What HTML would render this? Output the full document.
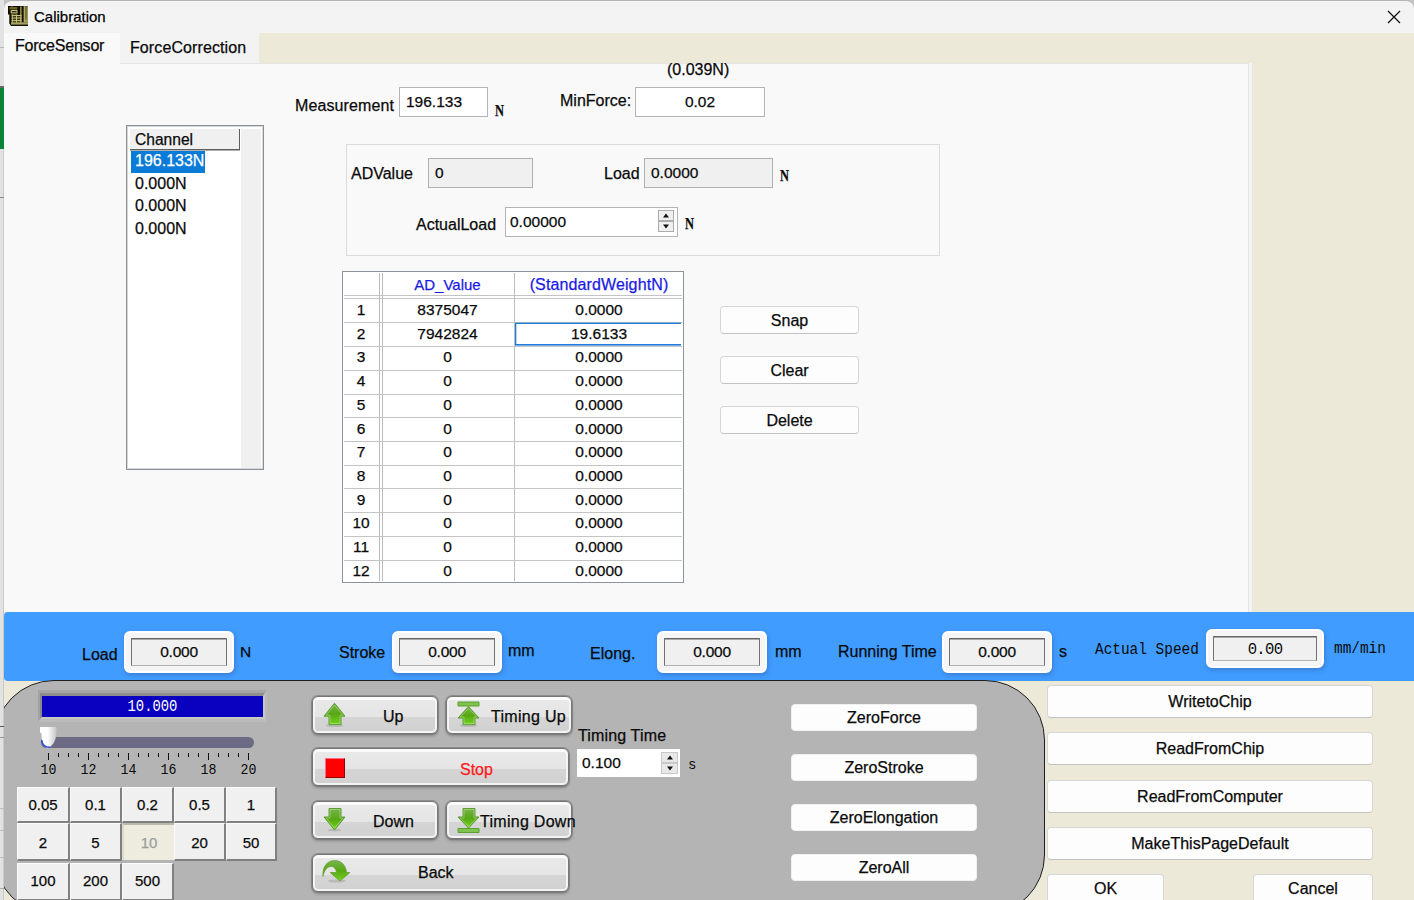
<!DOCTYPE html>
<html lang="en">
<head>
<meta charset="utf-8">
<title>Calibration</title>
<style>
html,body{margin:0;padding:0;}
body{width:1414px;height:900px;overflow:hidden;position:relative;background:#ece9d8;
  font-family:"Liberation Sans",sans-serif;font-size:16px;color:#0a0a0a;-webkit-text-stroke:0.25px;}
.a{position:absolute;box-sizing:border-box;}
.t{position:absolute;white-space:nowrap;line-height:20px;height:20px;}
.mono{font-family:"Liberation Mono",monospace;-webkit-text-stroke:0;}
.c{text-align:center;}
/* inputs */
.in{font-size:15.5px;position:absolute;box-sizing:border-box;background:#fff;border:1px solid #b4b4b8;line-height:27px;padding-left:6px;white-space:nowrap;}
.in.ro{background:#f0f0f0;border-color:#b0b0b0;}
/* flat win11 button */
.wb{position:absolute;box-sizing:border-box;background:#fdfdfd;border:1px solid #d6d6d6;border-bottom-color:#c2c2c2;border-radius:4px;text-align:center;white-space:nowrap;}
/* glossy button */
.gb{position:absolute;box-sizing:border-box;border:1px solid #767676;border-radius:6px;
  background:linear-gradient(#e9e9e9 0%,#e5e5e5 55%,#d5d5d5 55%,#d1d1d1 100%);
  box-shadow:inset 0 4px 0 -1px #fbfbfb, inset 2px 0 0 0 #f4f4f4, inset -2px 0 0 0 #f4f4f4, inset 0 -2px 0 0 #f4f4f4, 0 0 0 1px rgba(110,110,110,.55), 0 2px 3px rgba(0,0,0,.25);white-space:nowrap;}
/* bevel speed buttons */
.sb{position:absolute;box-sizing:border-box;background:#f0f0f0;font-size:15px;
  border-top:1px solid #fbfbfb;border-left:1px solid #fbfbfb;border-right:2px solid #808080;border-bottom:2px solid #808080;
  text-align:center;white-space:nowrap;}
.sb.dn{background:#eeebdf;color:#9c9c9c;border-top:2px solid #b9b9ab;border-left:2px solid #dcdacb;border-right:0;border-bottom:0;}
/* readout box in blue bar */
.rb{position:absolute;box-sizing:border-box;background:#f5f5f5;border:2px solid #fefefe;border-radius:6px;box-shadow:1px 2px 4px rgba(50,80,140,.4);}
.rb i{position:absolute;box-sizing:border-box;left:5px;top:5px;right:5px;bottom:5px;background:#f0f0f0;
  border:1px solid #727272;border-top-color:#666;border-bottom-color:#b2b2b2;box-shadow:inset 0 1px 0 #a8a8a8;
  font-style:normal;text-align:center;line-height:25px;white-space:nowrap;font-size:15.5px;letter-spacing:-0.25px;}
</style>
</head>
<body>
<!-- left strip of window behind -->
<div class="a" style="left:0;top:0;width:4px;height:900px;background:#e2e2e2"></div>
<div class="a" style="left:3px;top:150px;width:1px;height:750px;background:#c9c9c9"></div>
<div class="a" style="left:0;top:47px;width:4px;height:1px;background:#b8b8b8"></div>
<div class="a" style="left:0;top:86px;width:4px;height:2px;background:#6a6a6a"></div>
<div class="a" style="left:0;top:88px;width:4px;height:61px;background:#0a8438"></div>
<div class="a" style="left:0;top:197px;width:4px;height:1px;background:#8c8c8c"></div>
<div class="a" style="left:0;top:726px;width:4px;height:1px;background:#555"></div>
<div class="a" style="left:0;top:737px;width:4px;height:1px;background:#999"></div>
<div class="a" style="left:0;top:808px;width:4px;height:1px;background:#bbb"></div>
<div class="a" style="left:0;top:830px;width:4px;height:1px;background:#bbb"></div>
<div class="a" style="left:0;top:857px;width:4px;height:1px;background:#bbb"></div>
<div class="a" style="left:0;top:888px;width:4px;height:1px;background:#aaa"></div>

<!-- title bar -->
<div class="a" style="left:4px;top:0;width:1410px;height:10px;background:#c4c4c4"></div>
<div class="a" style="left:4px;top:0;width:1410px;height:33px;background:#f3f3f3;border-top:1px solid #b4b4b4;border-radius:8px 8px 0 0"></div>
<svg class="a" style="left:8px;top:6px" width="20" height="20" viewBox="0 0 20 20">
<path d="M0 0 H20 V20 H3 L1.3 17.5 V8.6 H0 Z" fill="#120f00"/>
<rect x="1.5" y="1" width="7.8" height="2.6" fill="#6a6628"/>
<rect x="3.6" y="0.2" width="1" height="1" fill="#8a8644"/>
<rect x="2.6" y="4.1" width="7" height="3.5" rx="1" fill="#c4c184"/>
<rect x="3.8" y="5.2" width="4.8" height="1.1" fill="#120f00"/>
<rect x="2.8" y="7.7" width="6.8" height="1" fill="#6e6a2c"/>
<rect x="12" y="0.5" width="1.7" height="16" fill="#8a8644"/>
<rect x="15.6" y="0.2" width="4.4" height="16.2" fill="#9c985a"/>
<rect x="16.3" y="0.2" width="0.8" height="16" fill="#b6b272"/>
<rect x="17.5" y="0.2" width="0.9" height="13.2" fill="#4a4612"/>
<rect x="3.6" y="8.7" width="9.8" height="8.3" fill="#3c3808"/>
<g fill="#d2cf92"><rect x="3.6" y="9" width="9.8" height="0.9"/><rect x="3.6" y="11.6" width="9.8" height="0.9"/><rect x="3.6" y="14.2" width="9.8" height="0.9"/>
<rect x="3.8" y="8.7" width="0.9" height="8.3"/><rect x="8.1" y="8.7" width="0.9" height="8.3"/><rect x="12.4" y="8.7" width="0.9" height="8.3"/></g>
<rect x="3" y="16.3" width="17" height="2.3" fill="#a6a262"/>
</svg>
<div class="t" style="left:34px;top:7px;font-size:15px;color:#000">Calibration</div>
<svg class="a" style="left:1387px;top:10px" width="14" height="14" viewBox="0 0 14 14"><path d="M1 1 L13 13 M13 1 L1 13" stroke="#111" stroke-width="1.3" fill="none"/></svg>

<!-- tabs -->
<div class="a" style="left:4px;top:33px;width:116px;height:31px;background:#f9f9f9"></div>
<div class="a" style="left:120px;top:33px;width:139px;height:30px;background:#f3f3f3"></div>

<!-- tab pane -->
<div class="a" style="left:4px;top:63px;width:1248px;height:549px;background:#f3f3f3"></div>
<div class="a" style="left:4px;top:63px;width:1245px;height:549px;background:#f9f9f9;border-top:1px solid #e5e5e5;border-right:1px solid #e5e5e5"></div>
<div class="a" style="left:4px;top:33px;width:116px;height:32px;background:#f9f9f9"></div>
<div class="t" style="left:15px;top:36px;letter-spacing:-0.22px">ForceSensor</div>
<div class="t" style="left:130px;top:38px;letter-spacing:0.1px">ForceCorrection</div>


<!-- top row -->
<div class="t" style="left:667px;top:60px">(0.039N)</div>
<div class="t" style="left:295px;top:96px;letter-spacing:0.12px">Measurement</div>
<div class="in" style="left:399px;top:87px;width:89px;height:30px">196.133</div>
<div class="t" style="left:495px;top:101px;font-family:'Liberation Serif',serif;font-size:16px;font-weight:bold;transform:scaleX(.78);transform-origin:0 0">N</div>
<div class="t" style="left:560px;top:91px">MinForce:</div>
<div class="in c" style="left:635px;top:87px;width:130px;height:30px;padding-left:0">0.02</div>

<!-- channel list -->
<div class="a" style="left:126px;top:125px;width:138px;height:345px;background:#fff;border:1px solid #8b8f98;box-shadow:inset 0 0 0 1px rgba(139,143,152,.35)"></div>
<div class="a" style="left:241px;top:129px;width:20px;height:339px;background:#f0f0f0"></div>
<div class="a" style="left:130px;top:129px;width:110px;height:21px;background:#f0f0f0;border-right:1px solid #5e5e5e;border-bottom:1px solid #5e5e5e;box-shadow:0 1px 0 #b0b0b0"></div>
<div class="t" style="left:135px;top:130px;font-size:15.6px">Channel</div>
<div class="a" style="left:131px;top:151px;width:74px;height:22px;background:#0a7bd7"></div>
<div class="t" style="left:135px;top:151px;color:#fff">196.133N</div>
<div class="t" style="left:135px;top:174px">0.000N</div>
<div class="t" style="left:135px;top:196px">0.000N</div>
<div class="t" style="left:135px;top:219px">0.000N</div>

<!-- group box -->
<div class="a" style="left:346px;top:144px;width:594px;height:112px;border:1px solid #dcdcdc"></div>
<div class="t" style="left:351px;top:164px">ADValue</div>
<div class="in ro" style="left:428px;top:158px;width:105px;height:30px">0</div>
<div class="t" style="left:604px;top:164px">Load</div>
<div class="in ro" style="left:644px;top:158px;width:129px;height:30px">0.0000</div>
<div class="t" style="left:780px;top:166px;font-family:'Liberation Serif',serif;font-size:16px;font-weight:bold;transform:scaleX(.78);transform-origin:0 0">N</div>
<div class="t" style="left:416px;top:215px">ActualLoad</div>
<div class="in" style="left:505px;top:207px;width:173px;height:30px;padding-left:4px">0.00000</div>
<div class="a" style="left:658px;top:210px;width:16px;height:11px;background:#f0f0f0;border:1px solid #adadad"></div>
<div class="a" style="left:658px;top:221px;width:16px;height:11px;background:#f0f0f0;border:1px solid #adadad"></div>
<svg class="a" style="left:658px;top:210px" width="16" height="22" viewBox="0 0 16 22"><path d="M5 7.5 L8 3.5 L11 7.5 Z M5 14.5 L8 18.5 L11 14.5 Z" fill="#111"/></svg>
<div class="t" style="left:685px;top:214px;font-family:'Liberation Serif',serif;font-size:16px;font-weight:bold;transform:scaleX(.78);transform-origin:0 0">N</div>

<!-- table -->
<div class="a" style="left:342px;top:271px;width:342px;height:312px;background:#fff;border:1px solid #8e9299"></div>
<div class="t c" style="left:382px;top:275px;width:131px;color:#1a1ae6;font-size:15px">AD_Value</div>
<div class="t c" style="left:515px;top:275px;width:168px;color:#1a1ae6;font-size:16px;letter-spacing:0.12px">(StandardWeightN)</div>
<div class="a" style="left:344px;top:295px;width:338px;height:1px;background:#c4c4c4"></div>
<div class="a" style="left:344px;top:298px;width:338px;height:1px;background:#c4c4c4"></div>
<div class="a" style="left:379px;top:273px;width:1px;height:308px;background:#bdbdbd"></div>
<div class="a" style="left:382px;top:273px;width:1px;height:308px;background:#bdbdbd"></div>
<div class="a" style="left:514px;top:273px;width:1px;height:308px;background:#bdbdbd"></div>
<div class="t c" style="left:343px;top:300.0px;width:36px;font-size:15.5px">1</div><div class="t c" style="left:382px;top:300.0px;width:131px;font-size:15.5px">8375047</div><div class="t c" style="left:515px;top:300.0px;width:168px;font-size:15.5px">0.0000</div>
<div class="a" style="left:344px;top:322px;width:338px;height:1px;background:#c4c4c4"></div>
<div class="t c" style="left:343px;top:323.7px;width:36px;font-size:15.5px">2</div><div class="t c" style="left:382px;top:323.7px;width:131px;font-size:15.5px">7942824</div><div class="t c" style="left:515px;top:323.7px;width:168px;font-size:15.5px">19.6133</div>
<div class="a" style="left:344px;top:346px;width:338px;height:1px;background:#c4c4c4"></div>
<div class="t c" style="left:343px;top:347.4px;width:36px;font-size:15.5px">3</div><div class="t c" style="left:382px;top:347.4px;width:131px;font-size:15.5px">0</div><div class="t c" style="left:515px;top:347.4px;width:168px;font-size:15.5px">0.0000</div>
<div class="a" style="left:344px;top:370px;width:338px;height:1px;background:#c4c4c4"></div>
<div class="t c" style="left:343px;top:371.1px;width:36px;font-size:15.5px">4</div><div class="t c" style="left:382px;top:371.1px;width:131px;font-size:15.5px">0</div><div class="t c" style="left:515px;top:371.1px;width:168px;font-size:15.5px">0.0000</div>
<div class="a" style="left:344px;top:394px;width:338px;height:1px;background:#c4c4c4"></div>
<div class="t c" style="left:343px;top:394.8px;width:36px;font-size:15.5px">5</div><div class="t c" style="left:382px;top:394.8px;width:131px;font-size:15.5px">0</div><div class="t c" style="left:515px;top:394.8px;width:168px;font-size:15.5px">0.0000</div>
<div class="a" style="left:344px;top:417px;width:338px;height:1px;background:#c4c4c4"></div>
<div class="t c" style="left:343px;top:418.6px;width:36px;font-size:15.5px">6</div><div class="t c" style="left:382px;top:418.6px;width:131px;font-size:15.5px">0</div><div class="t c" style="left:515px;top:418.6px;width:168px;font-size:15.5px">0.0000</div>
<div class="a" style="left:344px;top:441px;width:338px;height:1px;background:#c4c4c4"></div>
<div class="t c" style="left:343px;top:442.3px;width:36px;font-size:15.5px">7</div><div class="t c" style="left:382px;top:442.3px;width:131px;font-size:15.5px">0</div><div class="t c" style="left:515px;top:442.3px;width:168px;font-size:15.5px">0.0000</div>
<div class="a" style="left:344px;top:465px;width:338px;height:1px;background:#c4c4c4"></div>
<div class="t c" style="left:343px;top:466.0px;width:36px;font-size:15.5px">8</div><div class="t c" style="left:382px;top:466.0px;width:131px;font-size:15.5px">0</div><div class="t c" style="left:515px;top:466.0px;width:168px;font-size:15.5px">0.0000</div>
<div class="a" style="left:344px;top:488px;width:338px;height:1px;background:#c4c4c4"></div>
<div class="t c" style="left:343px;top:489.7px;width:36px;font-size:15.5px">9</div><div class="t c" style="left:382px;top:489.7px;width:131px;font-size:15.5px">0</div><div class="t c" style="left:515px;top:489.7px;width:168px;font-size:15.5px">0.0000</div>
<div class="a" style="left:344px;top:512px;width:338px;height:1px;background:#c4c4c4"></div>
<div class="t c" style="left:343px;top:513.4px;width:36px;font-size:15.5px">10</div><div class="t c" style="left:382px;top:513.4px;width:131px;font-size:15.5px">0</div><div class="t c" style="left:515px;top:513.4px;width:168px;font-size:15.5px">0.0000</div>
<div class="a" style="left:344px;top:536px;width:338px;height:1px;background:#c4c4c4"></div>
<div class="t c" style="left:343px;top:537.1px;width:36px;font-size:15.5px">11</div><div class="t c" style="left:382px;top:537.1px;width:131px;font-size:15.5px">0</div><div class="t c" style="left:515px;top:537.1px;width:168px;font-size:15.5px">0.0000</div>
<div class="a" style="left:344px;top:560px;width:338px;height:1px;background:#c4c4c4"></div>
<div class="t c" style="left:343px;top:560.8px;width:36px;font-size:15.5px">12</div><div class="t c" style="left:382px;top:560.8px;width:131px;font-size:15.5px">0</div><div class="t c" style="left:515px;top:560.8px;width:168px;font-size:15.5px">0.0000</div>
<div class="a" style="left:515px;top:323px;width:166px;height:22px;border:1px solid #1c7ad8;border-right:0;box-shadow:0 -1px 0 rgba(28,122,216,.3),0 1px 0 rgba(28,122,216,.6),inset 1px 0 0 rgba(28,122,216,.3)"></div>


<!-- snap/clear/delete -->
<div class="wb" style="left:720px;top:306px;width:139px;height:28px;line-height:28px">Snap</div>
<div class="wb" style="left:720px;top:356px;width:139px;height:28px;line-height:28px">Clear</div>
<div class="wb" style="left:720px;top:406px;width:139px;height:28px;line-height:28px">Delete</div>


<!-- blue bar -->
<div class="a" style="left:4px;top:612px;width:1410px;height:69px;background:#409cff;border-radius:4px 0 0 4px"></div>

<div class="t" style="left:82px;top:645px;font-size:16px">Load</div>
<div class="rb" style="left:124px;top:631px;width:110px;height:42px"><i>0.000</i></div>
<div class="t" style="left:240px;top:642px;font-size:15.5px">N</div>
<div class="t" style="left:339px;top:643px;font-size:16px">Stroke</div>
<div class="rb" style="left:392px;top:631px;width:110px;height:42px"><i>0.000</i></div>
<div class="t" style="left:508px;top:641px;font-size:16px">mm</div>
<div class="t" style="left:590px;top:644px;font-size:16px">Elong.</div>
<div class="rb" style="left:657px;top:631px;width:110px;height:42px"><i>0.000</i></div>
<div class="t" style="left:775px;top:642px;font-size:16px">mm</div>
<div class="t" style="left:838px;top:642px;font-size:16px">Running Time</div>
<div class="rb" style="left:942px;top:631px;width:110px;height:42px"><i>0.000</i></div>
<div class="t" style="left:1059px;top:642px;font-size:16px">s</div>
<div class="t mono" style="left:1095px;top:640px;font-size:15.6px;transform:scaleX(.925);transform-origin:0 50%">Actual Speed</div>
<div class="rb" style="left:1206px;top:629px;width:118px;height:39px"><i class="mono" style="font-size:15.6px;line-height:26px;letter-spacing:-0.7px">0.00</i></div>
<div class="t mono" style="left:1334px;top:639px;font-size:15.6px;transform:scaleX(.925);transform-origin:0 50%">mm/min</div>


<!-- gray panel -->
<div class="a" style="left:4px;top:670px;width:1100px;height:230px;overflow:hidden"><div class="a" style="left:-10.5px;top:10px;width:1051px;height:235px;background:#b4b4b4;border:1px solid #1e1e1e;border-radius:60px"></div></div>

<!-- speed indicator -->
<div class="a" style="left:38px;top:690px;width:229px;height:32px;border-top:3px solid #a6a6a6;border-left:2px solid #a2a2a2;border-right:2px solid #bababa;border-bottom:3px solid #bcbcbc"></div><div class="a" style="left:40px;top:693px;width:225px;height:26px;border-top:3px solid #8e8e8e;border-left:2px solid #8a8a8a;border-right:2px solid #c6c6c4;border-bottom:2px solid #c9c9c3;background:#0a00c0"></div>
<div class="t mono c" style="left:42px;top:697px;width:221px;color:#fff;font-size:16.9px;transform:scaleX(.82)">10.000</div>
<!-- slider -->
<div class="a" style="left:41px;top:737px;width:213px;height:11px;background:#6b6b85;border-radius:6px"></div>
<svg class="a" style="left:36px;top:724px" width="26" height="28" viewBox="36 724 26 28"><defs><linearGradient id="th" x1="0" y1="0" x2="1" y2="0"><stop offset="0.45" stop-color="#ffffff"/><stop offset="1" stop-color="#c4c4c4"/></linearGradient></defs>
<path d="M40 727 H56.5 V731 C56.5 738 54.5 745 48 748 C44 747 41.5 742 41.3 733 H40 Z" fill="url(#th)"/>
<path d="M41.6 740 C42.2 744 45 747.3 50 747.3" fill="none" stroke="#2748e6" stroke-width="1.4"/></svg>
<div class="a" style="left:48px;top:753px;width:1px;height:7px;background:#111"></div><div class="a" style="left:58px;top:753px;width:1px;height:4px;background:#111"></div><div class="a" style="left:68px;top:753px;width:1px;height:4px;background:#111"></div><div class="a" style="left:78px;top:753px;width:1px;height:4px;background:#111"></div><div class="a" style="left:88px;top:753px;width:1px;height:7px;background:#111"></div><div class="a" style="left:98px;top:753px;width:1px;height:4px;background:#111"></div><div class="a" style="left:108px;top:753px;width:1px;height:4px;background:#111"></div><div class="a" style="left:118px;top:753px;width:1px;height:4px;background:#111"></div><div class="a" style="left:128px;top:753px;width:1px;height:7px;background:#111"></div><div class="a" style="left:138px;top:753px;width:1px;height:4px;background:#111"></div><div class="a" style="left:148px;top:753px;width:1px;height:4px;background:#111"></div><div class="a" style="left:158px;top:753px;width:1px;height:4px;background:#111"></div><div class="a" style="left:168px;top:753px;width:1px;height:7px;background:#111"></div><div class="a" style="left:178px;top:753px;width:1px;height:4px;background:#111"></div><div class="a" style="left:188px;top:753px;width:1px;height:4px;background:#111"></div><div class="a" style="left:198px;top:753px;width:1px;height:4px;background:#111"></div><div class="a" style="left:208px;top:753px;width:1px;height:7px;background:#111"></div><div class="a" style="left:218px;top:753px;width:1px;height:4px;background:#111"></div><div class="a" style="left:228px;top:753px;width:1px;height:4px;background:#111"></div><div class="a" style="left:238px;top:753px;width:1px;height:4px;background:#111"></div><div class="a" style="left:248px;top:753px;width:1px;height:7px;background:#111"></div><div class="t mono c" style="left:33px;top:760px;width:31px;font-size:15.4px;transform:scaleX(.86)">10</div><div class="t mono c" style="left:73px;top:760px;width:31px;font-size:15.4px;transform:scaleX(.86)">12</div><div class="t mono c" style="left:113px;top:760px;width:31px;font-size:15.4px;transform:scaleX(.86)">14</div><div class="t mono c" style="left:153px;top:760px;width:31px;font-size:15.4px;transform:scaleX(.86)">16</div><div class="t mono c" style="left:193px;top:760px;width:31px;font-size:15.4px;transform:scaleX(.86)">18</div><div class="t mono c" style="left:233px;top:760px;width:31px;font-size:15.4px;transform:scaleX(.86)">20</div>
<!-- speed buttons -->
<div class="sb" style="left:17px;top:787px;width:53px;height:36px;line-height:34.2px">0.05</div>
<div class="sb" style="left:70px;top:787px;width:52px;height:36px;line-height:34.2px">0.1</div>
<div class="sb" style="left:122px;top:787px;width:52px;height:36px;line-height:34.2px">0.2</div>
<div class="sb" style="left:174px;top:787px;width:52px;height:36px;line-height:34.2px">0.5</div>
<div class="sb" style="left:226px;top:787px;width:51px;height:36px;line-height:34.2px">1</div>
<div class="sb" style="left:17px;top:823px;width:53px;height:38px;line-height:37.8px">2</div>
<div class="sb" style="left:70px;top:823px;width:52px;height:38px;line-height:37.8px">5</div>
<div class="sb dn" style="left:122px;top:823px;width:52px;height:37px;line-height:35.8px">10</div>
<div class="sb" style="left:174px;top:823px;width:52px;height:38px;line-height:37.8px">20</div>
<div class="sb" style="left:226px;top:823px;width:51px;height:38px;line-height:37.8px">50</div>
<div class="sb" style="left:17px;top:863px;width:53px;height:38px;line-height:34.2px">100</div>
<div class="sb" style="left:70px;top:863px;width:52px;height:38px;line-height:34.2px">200</div>
<div class="sb" style="left:122px;top:863px;width:52px;height:38px;line-height:34.2px">500</div>

<!-- glossy buttons -->
<div class="gb" style="left:312px;top:696px;width:126px;height:38px"></div>
<div class="gb" style="left:446px;top:696px;width:126px;height:38px"></div>
<div class="gb" style="left:312px;top:748px;width:257px;height:38px"></div>
<div class="gb" style="left:312px;top:801px;width:126px;height:38px"></div>
<div class="gb" style="left:446px;top:801px;width:126px;height:38px"></div>
<div class="gb" style="left:312px;top:854px;width:257px;height:38px"></div>
<div class="t" style="left:383px;top:707px;font-size:16px">Up</div>
<div class="t" style="left:491px;top:707px;font-size:16px;letter-spacing:0.3px">Timing Up</div>
<div class="t" style="left:460px;top:760px;font-size:16px;color:#ff1a1a">Stop</div>
<div class="t" style="left:373px;top:812px;font-size:16px">Down</div>
<div class="t" style="left:480px;top:812px;font-size:16px;letter-spacing:0.28px">Timing Down</div>
<div class="t" style="left:418px;top:863px;font-size:16px">Back</div>
<svg class="a" style="left:300px;top:690px" width="300" height="210" viewBox="300 690 300 210">
<defs>
<linearGradient id="g1" x1="0" y1="0" x2="0" y2="1"><stop offset="0" stop-color="#78b44c"/><stop offset="0.5" stop-color="#57a714"/><stop offset="1" stop-color="#74d41e"/></linearGradient>
</defs>
<g fill="rgba(0,0,0,.12)"><ellipse cx="334.5" cy="725.5" rx="9" ry="1.6"/><ellipse cx="468.5" cy="725.5" rx="9" ry="1.6"/><ellipse cx="334.5" cy="830" rx="7" ry="1.4"/><ellipse cx="337" cy="881" rx="9" ry="1.6"/></g>
<g stroke="#5d9e30" stroke-width="1" stroke-linejoin="round">
<path d="M334.5 703.2 L345 716.2 L341 716.2 L341 724.6 L329 724.6 L329 716.2 L324 716.2 Z" fill="url(#g1)"/>
<path d="M458 702 H479 V706 H458 Z" fill="#7fc44e"/>
<path d="M468.5 706.6 L479 718 L475 718 L475 724.6 L463 724.6 L463 718 L458 718 Z" fill="url(#g1)"/>
<path d="M329 808.5 H341 V817 H345 L334.5 830 L324 817 H329 Z" fill="url(#g1)"/>
<path d="M463 808.5 H475 V817 H479 L468.5 828 L458 817 H463 Z" fill="url(#g1)"/>
<path d="M458 828.5 H479 V832.5 H458 Z" fill="#7fc44e"/>
</g>
<g stroke="rgba(255,255,255,.3)" stroke-width="1" fill="none" stroke-linejoin="round">
<path d="M334.5 705 L342.8 715.2 L340 715.2 L340 723.6 L330 723.6 L330 715.2 L326.2 715.2 Z"/>
<path d="M468.5 708.3 L476.8 717 L474 717 L474 723.6 L464 723.6 L464 717 L460.2 717 Z"/>
<path d="M330 809.5 H340 V818 H342.8 L334.5 828.3 L326.2 818 H330 Z"/>
<path d="M464 809.5 H474 V818 H476.8 L468.5 826.4 L460.2 818 H464 Z"/>
</g>
<path d="M323 876.5 C322 866 328 860.5 334.5 860.5 C341 860.5 346 865 346.5 872.5 L350 872.5 L340 881 L330 872.5 L336.5 872.5 C336 868.5 333.5 866 330.5 866.5 C326.5 867 324 871 323 876.5 Z" fill="url(#g1)" stroke="#5d9e30" stroke-width="0.7"/>
</svg>

<div class="a" style="left:325px;top:758px;width:20px;height:20px;background:#ff0000;border-top:1px solid #ff6a8a;border-left:1px solid #ff6a8a;border-right:1px solid #9a0000;border-bottom:1px solid #9a0000"></div>

<!-- timing time -->
<div class="t" style="left:578px;top:726px;font-size:16px;letter-spacing:0.15px">Timing Time</div>
<div class="a" style="left:577px;top:749px;width:103px;height:28px;background:#fff"></div>
<div class="t" style="left:582px;top:753px;font-size:15.5px">0.100</div>
<div class="a" style="left:661px;top:752px;width:17px;height:11px;background:#e8e8e8;border:1px solid #c9c9c9"></div>
<div class="a" style="left:661px;top:763px;width:17px;height:11px;background:#e8e8e8;border:1px solid #c9c9c9"></div>
<svg class="a" style="left:661.5px;top:752px" width="16" height="22" viewBox="0 0 16 22"><path d="M5 7.5 L8 3.5 L11 7.5 Z M5 14.5 L8 18.5 L11 14.5 Z" fill="#111"/></svg>
<div class="t mono" style="left:688px;top:755px;font-size:14px">s</div>

<!-- zero buttons -->
<div class="wb" style="left:791px;top:704px;width:186px;height:27px;line-height:25px;border-color:#f0f0f0">ZeroForce</div>
<div class="wb" style="left:791px;top:754px;width:186px;height:27px;line-height:25px;border-color:#f0f0f0">ZeroStroke</div>
<div class="wb" style="left:791px;top:804px;width:186px;height:27px;line-height:25px;border-color:#f0f0f0">ZeroElongation</div>
<div class="wb" style="left:791px;top:854px;width:186px;height:27px;line-height:25px;border-color:#f0f0f0">ZeroAll</div>



<div class="wb" style="left:1047px;top:685px;width:326px;height:33px;line-height:31px">WritetoChip</div>
<div class="wb" style="left:1047px;top:732px;width:326px;height:33px;line-height:31px">ReadFromChip</div>
<div class="wb" style="left:1047px;top:780px;width:326px;height:33px;line-height:31px">ReadFromComputer</div>
<div class="wb" style="left:1047px;top:827px;width:326px;height:33px;line-height:31px">MakeThisPageDefault</div>
<div class="wb" style="left:1047px;top:874px;width:117px;height:33px;line-height:28px">OK</div>
<div class="wb" style="left:1253px;top:874px;width:120px;height:33px;line-height:28px">Cancel</div>


</body>
</html>
